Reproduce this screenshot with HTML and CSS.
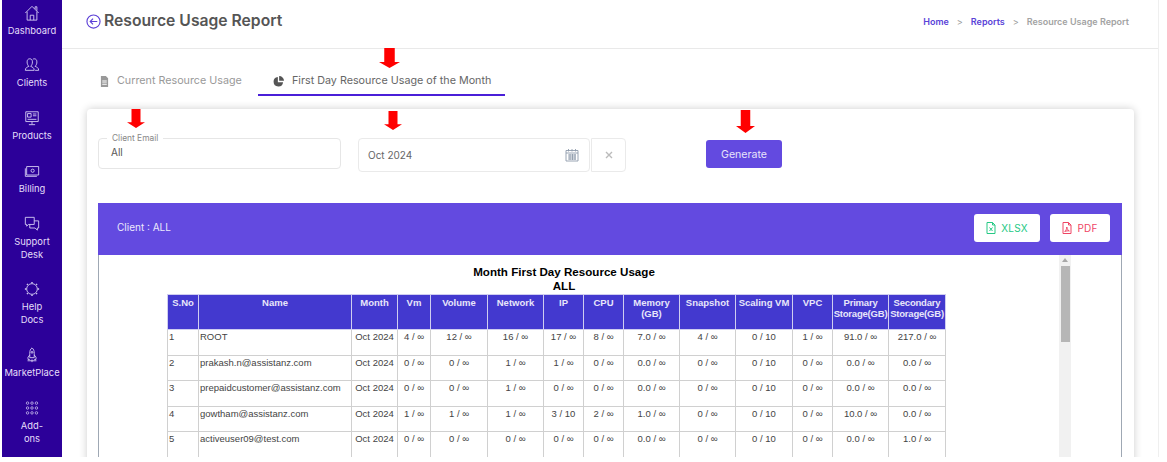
FILE: index.html
```html
<!DOCTYPE html>
<html lang="en">
<head>
<meta charset="utf-8">
<title>Resource Usage Report</title>
<link rel="stylesheet" href="styles.css">
</head>
<body>
<div class="app">
  <nav class="sidebar">
    <a class="nav-item">
      <svg class="nav-icon" viewBox="0 0 18 18"><path d="M1.500 9 9 1.500 16.500 9M3.500 7.500V17h11V7.500M7 17v-5.500h4V17M12.500 4.500V2h2v4.500"/></svg>
      <span>Dashboard</span>
    </a>
    <a class="nav-item">
      <svg class="nav-icon" viewBox="0 0 18 18"><path d="M1.500 15c0-3 2-3.500 4-4.500-1.500-1.500-2-3-2-5 0-2 1-3.500 3-3.500s3 1.500 3 3.500c0 2-.5 3.500-2 5 2 1 4 1.500 4 4.500zM10 2.500c.5-.3 1-.5 1.500-.5 2 0 3 1.500 3 3.500 0 2-.5 3.500-2 5 2 1 4 1.500 4 4.500h-4"/></svg>
      <span>Clients</span>
    </a>
    <a class="nav-item">
      <svg class="nav-icon" viewBox="0 0 18 18"><path d="M2 2h14v11H2zM9 13v3M5.500 16.500h7M4 4h4v4H4zM10 4.500h4M10 6.500h4M4 10.500h10"/></svg>
      <span>Products</span>
    </a>
    <a class="nav-item">
      <svg class="nav-icon" viewBox="0 0 18 18"><path d="M3 4h13.500v9.500H3zM1.500 6v9h13"/><circle cx="9.700" cy="8.700" r="1.800"/></svg>
      <span>Billing</span>
    </a>
    <a class="nav-item">
      <svg class="nav-icon" viewBox="0 0 18 18"><path d="M1.500 1.500h10v8H5L3 11.500v-2H1.500zM11.500 5.500h5v8H15V16l-2.500-2.500H6.500v-4"/></svg>
      <span>Support<br>Desk</span>
    </a>
    <a class="nav-item">
      <svg class="nav-icon" viewBox="0 0 18 18"><circle cx="9" cy="9" r="6"/><path class="nav-dots" d="M9 1v1.500M3.300 3.300l1 1M14.700 3.300l-1 1M1 9h1.500M15.500 9H17M3.300 14.700l1-1M14.700 14.700l-1-1M9 15.500V17"/></svg>
      <span>Help<br>Docs</span>
    </a>
    <a class="nav-item">
      <svg class="nav-icon" viewBox="0 0 18 18"><path d="M9 1c2 1.500 2.500 3.500 2.500 6v5h-5V7c0-2.500.5-4.500 2.500-6zM6.500 9 4.500 11.500V14h2M11.500 9l2 2.500V14h-2M4 15.500h10M9 14v3"/><circle cx="9" cy="6" r="1"/></svg>
      <span>MarketPlace</span>
    </a>
    <a class="nav-item">
      <svg class="nav-icon" viewBox="0 0 18 18"><g class="nav-thin"><circle cx="4" cy="3.500" r="1.400"/><circle cx="9" cy="3.500" r="1.400"/><circle cx="14" cy="3.500" r="1.400"/><circle cx="4" cy="9" r="1.400"/><circle cx="9" cy="9" r="1.400"/><circle cx="14" cy="9" r="1.400"/><circle cx="4" cy="14.500" r="1.400"/><circle cx="9" cy="14.500" r="1.400"/><circle cx="14" cy="14.500" r="1.400"/></g></svg>
      <span>Add-<br>ons</span>
    </a>
  </nav>

  <main class="main">
    <header class="topbar">
      <div class="title-wrap">
        <svg class="back-icon" viewBox="0 0 16 16"><circle cx="8" cy="8" r="7"/><path d="M12 8H4.500M7.500 5 4.500 8l3 3"/></svg>
        <h1 class="title">Resource Usage Report</h1>
      </div>
      <div class="crumbs">
        <a class="crumb-link">Home</a><span class="crumb-sep">&gt;</span><a class="crumb-link">Reports</a><span class="crumb-sep">&gt;</span><span class="crumb-now">Resource Usage Report</span>
      </div>
    </header>

    <div class="tabs">
      <div class="tab tab-first">
        <svg class="tab-icon" viewBox="0 0 10 12"><path d="M1 0h5.500L9 2.500V12H1zM2.500 5h5v1h-5zM2.500 7h5v1h-5zM2.500 9h5v1h-5z" fill-rule="evenodd"/></svg>
        <span>Current Resource Usage</span>
      </div>
      <div class="tab tab-active">
        <svg class="tab-icon tab-icon-pie" viewBox="0 0 12 12"><path d="M5.300 1a5.200 5.200 0 1 0 5.700 5.700H5.300zM6.700 0v5.300H12A5.300 5.300 0 0 0 6.700 0z"/></svg>
        <span>First Day Resource Usage of the Month</span>
      </div>
    </div>

    <section class="card">
      <div class="filters">
        <div class="field-email">
          <span class="field-legend">Client Email</span>
          <span class="field-value">All</span>
        </div>
        <div class="field-date">
          <span>Oct 2024</span>
          <svg class="cal-icon" viewBox="0 0 14 14"><path d="M1 2.500h12V13H1zM1 5h12M3.500 1v2.500M7 1v2.500M10.500 1v2.500M3 7h8M3 9h8M3 11h8M5 6v6M7.500 6v6M10 6v6"/></svg>
        </div>
        <div class="field-clear">
          <svg class="clear-icon" viewBox="0 0 8 8"><path d="M1 1l6 6M7 1 1 7"/></svg>
        </div>
        <button class="generate" type="button">Generate</button>
      </div>

      <div class="panel-head">
        <span class="panel-client">Client : ALL</span>
        <div class="panel-actions">
          <button class="export export-xlsx" type="button">
            <svg class="export-icon" viewBox="0 0 10 12"><path d="M1 .5h5.500L9 3v8.500H1zM6.500.5V3H9M3.500 5.500l3 3.500M6.500 5.500l-3 3.500"/></svg>
            XLSX
          </button>
          <button class="export export-pdf" type="button">
            <svg class="export-icon" viewBox="0 0 10 12"><path d="M1 .5h5.500L9 3v8.500H1zM6.500.5V3H9M2.800 9.500C4 8.500 5 6.500 4.800 5c.3 2 1.200 3.300 2.500 4-1.500-.3-3-.2-4.500.5z"/></svg>
            PDF
          </button>
        </div>
      </div>

      <div class="report-box">
        <div class="report">
          <div class="report-title">Month First Day Resource Usage<br>ALL</div>
          <table class="usage">
            <thead>
              <tr><th>S.No</th><th>Name</th><th>Month</th><th>Vm</th><th>Volume</th><th>Network</th><th>IP</th><th>CPU</th><th>Memory (GB)</th><th>Snapshot</th><th>Scaling VM</th><th>VPC</th><th>Primary Storage(GB)</th><th>Secondary Storage(GB)</th></tr>
            </thead>
            <tbody>
              <tr><td>1</td><td>ROOT</td><td>Oct 2024</td><td>4 / ∞</td><td>12 / ∞</td><td>16 / ∞</td><td>17 / ∞</td><td>8 / ∞</td><td>7.0 / ∞</td><td>4 / ∞</td><td>0 / 10</td><td>1 / ∞</td><td>91.0 / ∞</td><td>217.0 / ∞</td></tr>
              <tr><td>2</td><td>prakash.n@assistanz.com</td><td>Oct 2024</td><td>0 / ∞</td><td>0 / ∞</td><td>1 / ∞</td><td>1 / ∞</td><td>0 / ∞</td><td>0.0 / ∞</td><td>0 / ∞</td><td>0 / 10</td><td>0 / ∞</td><td>0.0 / ∞</td><td>0.0 / ∞</td></tr>
              <tr><td>3</td><td>prepaidcustomer@assistanz.com</td><td>Oct 2024</td><td>0 / ∞</td><td>0 / ∞</td><td>1 / ∞</td><td>0 / ∞</td><td>0 / ∞</td><td>0.0 / ∞</td><td>0 / ∞</td><td>0 / 10</td><td>0 / ∞</td><td>0.0 / ∞</td><td>0.0 / ∞</td></tr>
              <tr><td>4</td><td>gowtham@assistanz.com</td><td>Oct 2024</td><td>1 / ∞</td><td>1 / ∞</td><td>1 / ∞</td><td>3 / 10</td><td>2 / ∞</td><td>1.0 / ∞</td><td>0 / ∞</td><td>0 / 10</td><td>0 / ∞</td><td>10.0 / ∞</td><td>0.0 / ∞</td></tr>
              <tr><td>5</td><td>activeuser09@test.com</td><td>Oct 2024</td><td>0 / ∞</td><td>0 / ∞</td><td>0 / ∞</td><td>0 / ∞</td><td>0 / ∞</td><td>0.0 / ∞</td><td>0 / ∞</td><td>0 / 10</td><td>0 / ∞</td><td>0.0 / ∞</td><td>1.0 / ∞</td></tr>
            </tbody>
          </table>
        </div>
        <div class="scrollbar">
          <div class="scroll-up"></div>
          <div class="scroll-thumb"></div>
        </div>
      </div>
    </section>
  </main>

  <svg class="arrow arrow-tab" viewBox="0 0 20 20" preserveAspectRatio="none"><polygon points="5,0 15,0 15,14 20,14 10,20 0,14 5,14"/></svg>
  <svg class="arrow arrow-email" viewBox="0 0 20 20" preserveAspectRatio="none"><polygon points="5,0 15,0 15,14 20,14 10,20 0,14 5,14"/></svg>
  <svg class="arrow arrow-date" viewBox="0 0 20 20" preserveAspectRatio="none"><polygon points="5,0 15,0 15,14 20,14 10,20 0,14 5,14"/></svg>
  <svg class="arrow arrow-generate" viewBox="0 0 20 20" preserveAspectRatio="none"><polygon points="5,0 15,0 15,14 20,14 10,20 0,14 5,14"/></svg>
</div>
</body>
</html>
```

FILE: styles.css
```css
* { box-sizing: border-box; }

html, body {
  margin: 0;
  background: #fff;
}

body {
  font-family: "Inter", "Open Sans", sans-serif;
  color: #555;
}

.app {
  position: relative;
  display: flex;
  height: 457px;
  width: 1167px;
  padding-left: 2px;
  overflow: hidden;
}

/* Sidebar */
.sidebar {
  flex: 0 0 60px;
  background: #2c0099;
  padding-top: 3.500px;
  display: flex;
  flex-direction: column;
  gap: 19.750px;
}

.nav-item {
  display: flex;
  flex-direction: column;
  align-items: center;
  gap: 2px;
  color: #e4defa;
  font-size: 9.400px;
  line-height: 13px;
  text-align: center;
}

.nav-icon {
  width: 16px;
  height: 18px;
  fill: none;
  stroke: #d8d0f5;
  stroke-width: 1;
}

.nav-dots { stroke-width: 1.600; }
.nav-thin { stroke-width: .8; }

/* Main */
.main {
  flex: 0 0 1097px;
  border-right: 1px solid #efefef;
  min-width: 0;
}

.topbar {
  height: 49px;
  border-bottom: 1px solid #e9e9e9;
  padding: 0 29px 6px 24px;
  display: flex;
  align-items: center;
  justify-content: space-between;
}

.title-wrap {
  display: flex;
  align-items: center;
  gap: 3px;
}

.back-icon {
  width: 15px;
  height: 15px;
  fill: none;
  stroke: #5b3fd6;
  stroke-width: 1.200;
}

.title {
  margin: 0;
  font-size: 15.700px;
  line-height: 20px;
  font-weight: 600;
  color: #555;
}

.crumbs {
  display: flex;
  align-items: center;
  font-size: 9px;
  font-weight: 600;
}

.crumb-link { color: #5a43d8; }
.crumb-now { color: #a3a3a3; }

.crumb-sep {
  color: #9a9a9a;
  font-weight: 400;
  margin: 0 8px;
}

.tabs {
  display: flex;
  padding: 17px 0 0 36px;
}

.tab {
  display: flex;
  align-items: center;
  font-size: 10.750px;
  line-height: 14px;
  padding: 8px 0 6px;
  border-bottom: 2px solid transparent;
}

.tab-first {
  width: 160px;
  padding-left: 2px;
  color: #999;
}

.tab-active {
  width: 247px;
  padding-left: 15px;
  color: #666;
  border-bottom-color: #4a1fd8;
}

.tab-icon {
  width: 9px;
  height: 11px;
  margin-right: 8px;
  fill: #999;
  flex: none;
}

.tab-icon-pie {
  width: 11px;
  fill: #555;
  margin-right: 8px;
}

/* Card */
.card {
  margin: 13px 0 0 25px;
  width: 1047px;
  height: 360px;
  padding: 29px 12px 0 11px;
  background: #fff;
  border-radius: 4px;
  box-shadow: 0 0 9px rgba(0, 0, 0, .2);
}

.filters {
  display: flex;
  align-items: flex-start;
  height: 34px;
  margin-bottom: 31px;
  font-size: 10px;
}

.field-email {
  position: relative;
  width: 243px;
  height: 31px;
  border: 1px solid #e6e6e6;
  border-radius: 4px;
  padding: 7px 12px;
  line-height: 12px;
  color: #555;
}

.field-legend {
  position: absolute;
  left: 8px;
  top: -6px;
  padding: 0 5px;
  background: #fff;
  font-size: 8.400px;
  line-height: 10px;
  color: #888;
}

.field-date {
  width: 232px;
  height: 34px;
  margin-left: 17px;
  border: 1px solid #eaeaea;
  border-radius: 4px;
  padding: 0 10px 0 9px;
  display: flex;
  align-items: center;
  justify-content: space-between;
  color: #666;
  font-size: 10px;
}

.cal-icon {
  width: 14px;
  height: 14px;
  fill: none;
  stroke: #8e9bac;
  stroke-width: .9;
}

.field-clear {
  width: 35px;
  height: 34px;
  margin-left: 1px;
  border: 1px solid #eaeaea;
  border-radius: 0 4px 4px 0;
  display: flex;
  align-items: center;
  justify-content: center;
}

.clear-icon {
  width: 8px;
  height: 8px;
  fill: none;
  stroke: #bbb;
  stroke-width: 1.400;
}

.generate {
  width: 76px;
  height: 28px;
  margin: 2px 0 0 80px;
  border: 0;
  border-radius: 3px;
  background: #634ae0;
  color: #e8e4fb;
  font: 400 10.600px "Inter", sans-serif;
}

.panel-head {
  height: 52px;
  background: #634ae0;
  padding: 0 12px 2px 19px;
  display: flex;
  align-items: center;
  justify-content: space-between;
}

.panel-client {
  color: #ece9fc;
  font-size: 10px;
  padding-bottom: 2px;
}

.panel-actions {
  display: flex;
  gap: 10px;
}

.export {
  height: 28px;
  border: 0;
  border-radius: 3px;
  background: #fff;
  display: flex;
  align-items: center;
  justify-content: center;
  gap: 5px;
  font: 400 10px "Inter", sans-serif;
  letter-spacing: .2px;
}

.export-xlsx { width: 66px; color: #26c985; }
.export-pdf { width: 60px; color: #ef4565; }

.export-icon {
  width: 10px;
  height: 12px;
  fill: none;
  stroke: currentColor;
  stroke-width: 1;
}

/* Report */
.report-box {
  display: flex;
  height: 210px;
  border-left: 1px solid #9fa8b4;
  border-right: 1px solid #9fa8b4;
  background: #fff;
}

.report {
  width: 960px;
  padding-left: 68px;
  font-family: "Liberation Sans", Arial, sans-serif;
}

.report-title {
  width: 794px;
  padding-top: 10px;
  margin-bottom: 1px;
  text-align: center;
  font-size: 11.600px;
  line-height: 14px;
  font-weight: 700;
  color: #000;
}

.usage {
  border-collapse: collapse;
  table-layout: fixed;
  width: 778px;
  font-size: 9.500px;
  line-height: 11px;
}

.usage th, .usage td {
  border: 1px solid #d0d0d0;
  vertical-align: top;
}

.usage th {
  background: #4339cf;
  color: #e8e6fa;
  font-weight: 700;
  padding: 2px 0 0;
  height: 35px;
  text-align: center;
  border-color: #cfcdf0;
}

.usage td {
  color: #444;
  text-align: center;
  padding: 1px 1px 0;
}

.usage tbody tr { height: 25.500px; }

.usage td:nth-child(1),
.usage td:nth-child(2) { text-align: left; }

.usage th:nth-child(1) { width: 31px; }
.usage th:nth-child(2) { width: 153px; }
.usage th:nth-child(3) { width: 46px; }
.usage th:nth-child(4) { width: 33px; }
.usage th:nth-child(5) { width: 57px; }
.usage th:nth-child(6) { width: 56px; }
.usage th:nth-child(7) { width: 40px; }
.usage th:nth-child(8) { width: 40px; }
.usage th:nth-child(9) { width: 56px; }
.usage th:nth-child(10) { width: 56px; }
.usage th:nth-child(11) { width: 57px; }
.usage th:nth-child(12) { width: 40px; }
.usage th:nth-child(13) { width: 56px; }
.usage th:nth-child(14) { width: 57px; }

.usage th:nth-child(13),
.usage th:nth-child(14) { letter-spacing: -.2px; }

.scrollbar {
  width: 12px;
  background: #f1f1f1;
  display: flex;
  flex-direction: column;
  align-items: center;
}

.scroll-up {
  width: 0;
  height: 0;
  margin: 3px 0 4px;
  border-left: 3.500px solid transparent;
  border-right: 3.500px solid transparent;
  border-bottom: 4px solid #a8a8a8;
}

.scroll-thumb {
  width: 9px;
  height: 76px;
  background: #b6b6b6;
}

/* Red annotation arrows over the page */
.arrow {
  position: absolute;
  fill: #f00;
}

.arrow-tab { left: 379px; top: 48px; width: 21px; height: 20px; }
.arrow-email { left: 127px; top: 109px; width: 18px; height: 19px; }
.arrow-date { left: 384px; top: 111px; width: 18px; height: 19px; }
.arrow-generate { left: 736px; top: 110px; width: 19px; height: 23px; }
```
